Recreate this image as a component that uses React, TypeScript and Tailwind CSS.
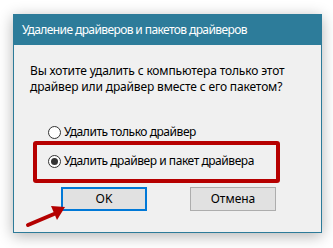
const font = { fontFamily: '"Noto Sans", "Open Sans", sans-serif' };

function Radio({ checked, label }: { checked?: boolean; label: string }) {
  return (
    <div className="flex items-center h-4">
      <span className="w-[13px] h-[13px] rounded-full border border-[#333] bg-white flex items-center justify-center shrink-0">
        {checked && <span className="w-[7px] h-[7px] rounded-full bg-[#333]" />}
      </span>
      <span className="ml-[3px] text-[12px] leading-4 tracking-[-0.45px] text-black">{label}</span>
    </div>
  );
}

export default function App() {
  return (
    <div className="relative w-[333px] h-[248px] bg-white pt-[14px] pl-[13px]" style={font}>
      <div className="w-[309px] h-[219px] border border-[#2d7b99] bg-[#f0f0f0] shadow-[0_3px_14px_rgba(0,0,0,0.3)] flex flex-col">
        <div className="h-[30px] bg-[#2d7c9a] text-white text-[12px] tracking-[-0.6px] flex items-center pl-[8px]">
          Удаление драйверов и пакетов драйверов
        </div>

        <div className="pl-[16px] pt-[18px] text-[12px] leading-4 tracking-[-0.15px] text-black">
          <p>Вы хотите удалить с компьютера только этот</p>
          <p>драйвер или драйвер вместе с его пакетом?</p>
        </div>

        <div className="pl-[34px] mt-[29px]">
          <Radio label="Удалить только драйвер" />
        </div>

        <div className="ml-[19px] mt-[1px] w-[247px] h-[42px] border-4 border-[#b60000] rounded-[3px] pl-[11px] pt-[8px]">
          <Radio checked label="Удалить драйвер и пакет драйвера" />
        </div>

        <div className="flex pl-[47px] mt-[4px] gap-[43px]">
          <button className="w-[86px] h-[24px] border-2 border-[#0078d7] bg-[#e1e1e1] text-[12px] text-black">OK</button>
          <button className="w-[86px] h-[24px] border border-[#adadad] bg-[#e1e1e1] text-[12px] text-black">Отмена</button>
        </div>
      </div>

      {/* red arrow pointing at OK */}
      <svg className="absolute left-[24px] top-[202px]" width="46" height="28" viewBox="0 0 46 28">
        <line x1="4" y1="23" x2="30" y2="12" stroke="#b40000" strokeWidth="4" strokeLinecap="round" />
        <polygon points="41,5 27,4 33,18" fill="#b40000" />
      </svg>
    </div>
  );
}
